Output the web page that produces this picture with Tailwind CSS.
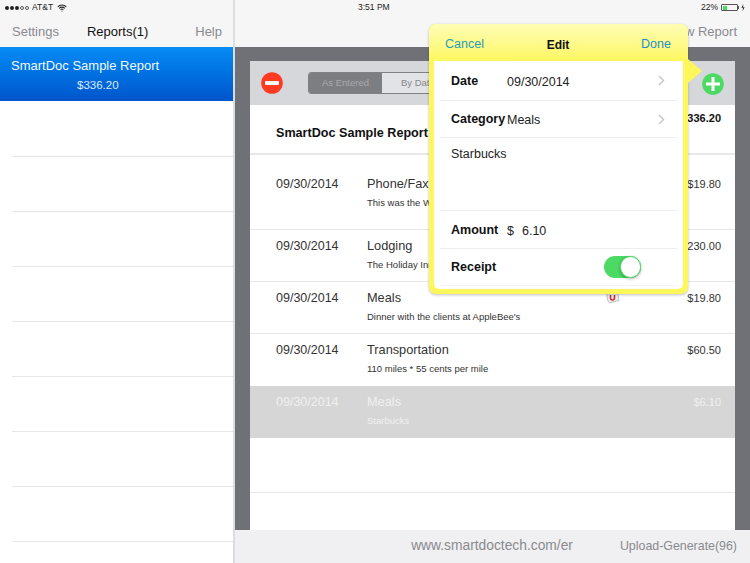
<!DOCTYPE html>
<html lang="en">
 <head>
  <meta charset="utf-8"/>
  <title>SmartDoc</title>
  <script src="https://cdn.jsdelivr.net/npm/@tailwindcss/browser@4"></script>
 </head>
 <body class="w-[750px] h-[563px] overflow-hidden bg-white font-['Liberation_Sans',Arial,sans-serif] text-[#1a1a1a]">
  <div class="relative flex w-[750px] h-[563px]">

   <!-- left: report list -->
   <aside class="w-[235px] h-full shrink-0 flex flex-col border-r-2 border-[#dcdde0]">
    <div class="h-[47px] shrink-0 bg-[#f6f6f7] flex flex-col">
     <div class="h-[15px] flex items-center pl-[5px] gap-[3px] text-[8.5px] text-[#222]">
      <span class="flex items-center gap-[1px]">
       <i class="w-[4px] h-[4px] rounded-full bg-[#222]"></i><i class="w-[4px] h-[4px] rounded-full bg-[#222]"></i><i class="w-[4px] h-[4px] rounded-full bg-[#222]"></i><i class="w-[4px] h-[4px] rounded-full border border-[#555]"></i><i class="w-[4px] h-[4px] rounded-full border border-[#555]"></i>
      </span>
      <span>AT&amp;T</span>
      <svg class="ml-[1px]" width="10" height="8" viewBox="0 0 10 8" fill="none" stroke="#222" stroke-width="1.1"><path d="M.7 2.8a6 6 0 0 1 8.6 0M2.2 4.3a3.9 3.9 0 0 1 5.6 0M3.6 5.700a2 2 0 0 1 2.8 0"/><circle cx="5" cy="7" r=".6" fill="#222" stroke="none"/></svg>
     </div>
     <div class="flex-1 flex items-center justify-between pl-[12px] pr-[11px] pt-[2px] text-[13px] text-[#8a8a8e]">
      <span>Settings</span>
      <span class="text-[#111] mr-[19px]">Reports(1)</span>
      <span>Help</span>
     </div>
    </div>
    <div class="h-[54px] shrink-0 bg-gradient-to-b from-[#0a8cf5] to-[#0054cc] text-white">
     <p class="pl-[11px] pt-[11px] text-[13px] leading-[16px] text-[#f2f8ff]">SmartDoc Sample Report</p>
     <p class="pl-[77px] pt-[4px] text-[11.5px] leading-[14px] text-[#dcebff]">$336.20</p>
    </div>
    <div class="flex-1 pl-[12px]">
     <div class="h-[56px] border-b border-[#e6e6e8]"></div>
     <div class="h-[55px] border-b border-[#e6e6e8]"></div>
     <div class="h-[55px] border-b border-[#e6e6e8]"></div>
     <div class="h-[55px] border-b border-[#e6e6e8]"></div>
     <div class="h-[55px] border-b border-[#e6e6e8]"></div>
     <div class="h-[55px] border-b border-[#e6e6e8]"></div>
     <div class="h-[55px] border-b border-[#e6e6e8]"></div>
     <div class="h-[55px] border-b border-[#e6e6e8]"></div>
    </div>
   </aside>

   <!-- right: report detail -->
   <main class="flex-1 h-full flex flex-col bg-[#6f7177] min-w-0">
    <div class="h-[47px] shrink-0 bg-[#f6f6f7] flex flex-col">
     <div class="relative h-[15px] flex items-center justify-end pr-[5px] gap-[2px] text-[8.5px] text-[#222]">
      <span class="absolute left-[123px]">3:51 PM</span>
      <span class="mr-[1px]">22%</span>
      <span class="flex items-center">
       <span class="w-[17px] h-[7px] border border-[#555] rounded-[1px] flex p-[0.5px]"><i class="w-[4px] h-full bg-[#4cd964]"></i></span>
       <i class="w-[1px] h-[3px] bg-[#555]"></i>
      </span>
      <svg width="4" height="7" viewBox="0 0 4 7"><path d="M2.4 0 .4 3.8H2L1.600 7l2-3.800H2z" fill="#222"/></svg>
     </div>
     <div class="flex-1 flex items-center justify-end pr-[13px] pt-[2px] text-[13px] text-[#8a8a8e]">View Report</div>
    </div>

    <div class="flex-1 min-h-0 pt-[14px] pl-[15px] pr-[15px]">
     <div class="h-full bg-white flex flex-col">
      <div class="h-[44px] shrink-0 bg-[#d6d7db] flex items-center pl-[11px]">
       <svg width="22" height="22" viewBox="0 0 22 22"><circle cx="11" cy="11" r="10.8" fill="#ff3b24"/><rect x="4" y="9" width="14" height="4" rx="1" fill="#fff"/></svg>
       <div class="ml-[25px] w-[140px] h-[22px] flex rounded-[3px] overflow-hidden border border-[#808185] text-[9.5px]">
        <span class="w-[73px] bg-[#7d7e82] text-[#a9aaad] flex items-center justify-center">As Entered</span>
        <span class="flex-1 bg-[#e2e3e6] text-[#85868a] flex items-center pl-[19px]">By Date</span>
       </div>
      </div>
      <div class="h-[50px] shrink-0 border-b-2 border-[#e8e8ea] flex items-center justify-between pl-[26px] pr-[14px]">
       <span class="text-[12.6px] font-bold text-[#111] pt-[8px]">SmartDoc Sample Report</span>
       <span class="text-[11px] font-bold text-[#111] pb-[21px]">$336.20</span>
      </div>

      <div class="h-[75px] shrink-0 border-b border-[#e8e8ea] flex pt-[22px] pl-[26px] pr-[14px]">
       <span class="w-[91px] shrink-0 text-[12.5px] leading-[14px] text-[#333]">09/30/2014</span>
       <div class="flex-1 min-w-0">
        <p class="text-[12.75px] leading-[14px] text-[#333]">Phone/Fax</p>
        <p class="mt-[6px] w-[280px] text-[9.5px] leading-[11px] text-[#333]">This was the WiFi charge at the hotel for the four days.</p>
       </div>
       <span class="text-[11px] leading-[14px] text-[#333]">$19.80</span>
      </div>
      <div class="h-[52px] shrink-0 border-b border-[#e8e8ea] flex pt-[9px] pl-[26px] pr-[14px]">
       <span class="w-[91px] shrink-0 text-[12.5px] leading-[14px] text-[#333]">09/30/2014</span>
       <div class="flex-1 min-w-0">
        <p class="text-[12.75px] leading-[14px] text-[#333]">Lodging</p>
        <p class="mt-[6px] text-[9.5px] leading-[11px] text-[#333]">The Holiday Inn</p>
       </div>
       <span class="text-[11px] leading-[14px] text-[#333]">$230.00</span>
      </div>
      <div class="h-[52px] shrink-0 border-b border-[#e8e8ea] flex pt-[9px] pl-[26px] pr-[14px]">
       <span class="w-[91px] shrink-0 text-[12.5px] leading-[14px] text-[#333]">09/30/2014</span>
       <div class="relative flex-1 min-w-0">
        <p class="text-[12.75px] leading-[14px] text-[#333]">Meals</p>
        <p class="mt-[6px] text-[9.5px] leading-[11px] text-[#333]">Dinner with the clients at AppleBee's</p>
        <svg class="absolute left-[238px] top-[0px]" width="16" height="13" viewBox="0 0 16 13"><path d="M1.500 0h11l1.500 9.500-9.500 2.500L2.500 9z" fill="#eeeeee" stroke="#aaaaaa" stroke-width=".7"/><path d="M5.500 4v3a2 2 0 0 0 4 0V4" fill="none" stroke="#c62f3a" stroke-width="1.600"/></svg>
       </div>
       <span class="text-[11px] leading-[14px] text-[#333]">$19.80</span>
      </div>
      <div class="h-[52px] shrink-0 flex pt-[9px] pl-[26px] pr-[14px]">
       <span class="w-[91px] shrink-0 text-[12.5px] leading-[14px] text-[#333]">09/30/2014</span>
       <div class="flex-1 min-w-0">
        <p class="text-[12.75px] leading-[14px] text-[#333]">Transportation</p>
        <p class="mt-[6px] text-[9.5px] leading-[11px] text-[#333]">110 miles * 55 cents per mile</p>
       </div>
       <span class="text-[11px] leading-[14px] text-[#333]">$60.50</span>
      </div>
      <div class="h-[52px] shrink-0 bg-[#d6d6d6] flex pt-[9px] pl-[26px] pr-[14px] text-[#f0f0f0]">
       <span class="w-[91px] shrink-0 text-[12.5px] leading-[14px]">09/30/2014</span>
       <div class="flex-1 min-w-0">
        <p class="text-[12.75px] leading-[14px]">Meals</p>
        <p class="mt-[6px] text-[9.5px] leading-[11px]">Starbucks</p>
       </div>
       <span class="text-[11px] leading-[14px]">$6.10</span>
      </div>
      <div class="h-[55px] shrink-0 border-b border-[#e8e8ea]"></div>
     </div>
    </div>

    <div class="h-[33px] shrink-0 bg-[#f0f0f2] flex items-center justify-end pr-[13px] text-[#8a8a8e]">
     <span class="text-[13.8px] mr-[47px]">www.smartdoctech.com/er</span>
     <span class="text-[12.4px]">Upload-Generate(96)</span>
    </div>
   </main>

   <!-- edit popover -->
   <div class="absolute left-[429px] top-[24px] w-[259px] h-[270px] rounded-[7px] bg-[#fdf75c] shadow-[0_1px_3px_rgba(0,0,0,0.25)]">
    <div class="absolute left-[259px] top-[35px] w-0 h-0 border-y-[12px] border-y-transparent border-l-[14px] border-l-[#fdf75c]"></div>
    <div class="h-[37px] rounded-t-[7px] bg-gradient-to-b from-[#fffdb4] to-[#fdf75c] flex items-center justify-between pl-[16px] pr-[17px] pt-[4px] text-[12.5px]">
     <span class="text-[#2b9cb8]">Cancel</span>
     <span class="font-bold text-[12px] text-[#111] mr-[9px]">Edit</span>
     <span class="text-[#1f8fc4] font-medium">Done</span>
    </div>
    <div class="mx-[5px] h-[228px] rounded-b-[5px] bg-white pl-[6px] pr-[6px]">
     <div class="h-[40px] border-b border-[#eeeeef] flex items-center pl-[11px] pr-[12px]">
      <span class="w-[56px] text-[12.5px] font-bold text-[#111] pt-[2px]">Date</span>
      <span class="flex-1 text-[12.5px] text-[#222] pt-[3px]">09/30/2014</span>
      <svg width="7" height="11" viewBox="0 0 7 11" fill="none" stroke="#c4c4c7" stroke-width="1.400"><path d="M1 1l4.500 4.500L1 10"/></svg>
     </div>
     <div class="h-[37px] border-b border-[#eeeeef] flex items-center pl-[11px] pr-[12px]">
      <span class="w-[56px] shrink-0 whitespace-nowrap text-[12.5px] font-bold text-[#111]">Category</span>
      <span class="flex-1 text-[12.5px] text-[#222] pt-[2px]">Meals</span>
      <svg width="7" height="11" viewBox="0 0 7 11" fill="none" stroke="#c4c4c7" stroke-width="1.400"><path d="M1 1l4.500 4.500L1 10"/></svg>
     </div>
     <div class="h-[73px] border-b border-[#eeeeef] pl-[11px] pt-[9px] text-[12.5px] leading-[15px] text-[#222]">Starbucks</div>
     <div class="h-[38px] border-b border-[#eeeeef] flex items-center pl-[11px]">
      <span class="w-[56px] text-[12.5px] font-bold text-[#111] pt-[1px]">Amount</span>
      <span class="text-[12.5px] text-[#222] pt-[3px] flex gap-[8px]"><span>$</span><span>6.10</span></span>
     </div>
     <div class="h-[37px] border-b border-[#f3f3f4] flex items-center justify-between pl-[11px] pr-[36px]">
      <span class="text-[12.5px] font-bold text-[#111]">Receipt</span>
      <span class="relative w-[37px] h-[22px] rounded-full bg-[#4cd964] flex justify-end">
       <i class="w-[21px] h-[22px] rounded-full bg-white border border-[#4cd964] shadow-[0_1px_3px_rgba(0,0,0,0.3)]"></i>
      </span>
     </div>
    </div>
   </div>

   <!-- add button sits on the toolbar, next to the popover arrow -->
   <svg class="absolute left-[702px] top-[73px]" width="22" height="22" viewBox="0 0 22 22"><circle cx="11" cy="11" r="10.800" fill="#4cd964"/><path d="M11 4v14M4 11h14" stroke="#fff" stroke-width="3"/></svg>
  </div>
 </body>
</html>
